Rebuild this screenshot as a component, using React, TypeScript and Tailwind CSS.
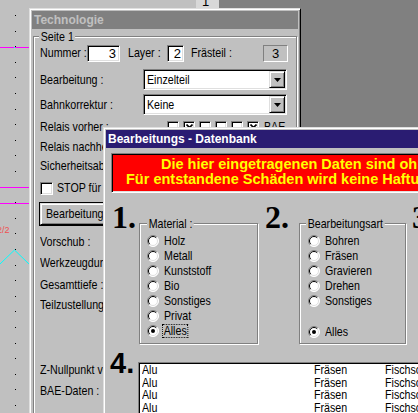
import React from 'react';

const sunken =
    'border border-t-[#808080] border-l-[#808080] border-b-white border-r-white shadow-[inset_1px_1px_0_#000,inset_-1px_-1px_0_#dfdfdf]';
const raised =
    'border border-t-[#dfdfdf] border-l-[#dfdfdf] border-b-black border-r-black shadow-[inset_1px_1px_0_#fff,inset_-1px_-1px_0_#808080]';
const etched =
    'border border-[#808080] shadow-[1px_1px_0_#fff,inset_1px_1px_0_#fff]';

// the old dialog font is narrow; squeeze Liberation Sans to match
function T({ children, className = '' }: { children: React.ReactNode; className?: string }) {
    return (
        <span className={`inline-block origin-left scale-x-[0.82] whitespace-nowrap ${className}`}>
            {children}
        </span>
    );
}

function Canvas() {
    const dots = Array.from({ length: 26 }, (_, i) => 15 + i * 15.6);
    return (
        <div className="absolute left-0 top-0 h-full w-[219px] bg-[#c0c0c0]">
            <svg width="219" height="413" className="block">
                {dots.map((y) => (
                    <rect key={y} x="15" y={Math.round(y)} width="1" height="1" fill="#000" />
                ))}
                <line x1="0" y1="47.5" x2="29" y2="47.5" stroke="#ff00ff" />
                <rect x="14" y="47" width="1" height="1" fill="#00ffff" />
                <line x1="0" y1="187.5" x2="29" y2="187.5" stroke="#ff00ff" />
                <line x1="0" y1="203.5" x2="29" y2="203.5" stroke="#ff00ff" />
                <text x="-3" y="233" fontSize="9" fill="#f05050" fontFamily="Liberation Sans, sans-serif">
                    2/2
                </text>
                <polyline points="0,264 14.5,250 29,264" fill="none" stroke="#00ffff" />
            </svg>
        </div>
    );
}

function DropButton() {
    return (
        <div className={`flex h-[17px] w-[16px] items-center justify-center bg-[#c0c0c0] ${raised}`}>
            <svg width="7" height="4" viewBox="0 0 7 4">
                <path d="M0 0h7L3.5 4z" fill="#000" />
            </svg>
        </div>
    );
}

function Select({ value }: { value: string }) {
    return (
        <div className={`flex h-[21px] w-[144px] items-center justify-between bg-white pl-[3px] pr-[1px] ${sunken}`}>
            <T>{value}</T>
            <DropButton />
        </div>
    );
}

function Check({ on, size = 12 }: { on?: boolean; size?: number }) {
    return (
        <div
            className={`flex shrink-0 items-center justify-center bg-white ${sunken}`}
            style={{ width: size, height: size }}
        >
            {on && (
                <svg width="7" height="7" viewBox="0 0 7 7">
                    <path d="M0.5 0.5l6 6M6.5 0.5l-6 6" stroke="#000" strokeWidth="1.6" />
                </svg>
            )}
        </div>
    );
}

function Radio({ on }: { on?: boolean }) {
    return (
        <svg width="12" height="12" viewBox="0 0 12 12" className="shrink-0">
            <circle cx="6" cy="6" r="5.5" fill="#fff" />
            <path d="M2.1 9.9A5.5 5.5 0 0 1 9.9 2.1" stroke="#808080" fill="none" />
            <path d="M9.9 2.1A5.5 5.5 0 0 1 2.1 9.9" stroke="#fff" fill="none" />
            <path d="M2.8 9.2A4.5 4.5 0 0 1 9.2 2.8" stroke="#000" fill="none" />
            <path d="M9.2 2.8A4.5 4.5 0 0 1 2.8 9.2" stroke="#dfdfdf" fill="none" />
            {on && <circle cx="6" cy="6" r="2" fill="#000" />}
        </svg>
    );
}

function TechWindow() {
    const row = 'flex h-[14px] items-center';
    return (
        <div className={`absolute left-[29px] top-[8px] h-[430px] w-[272px] bg-[#c0c0c0] p-[2px] ${raised}`}>
            <div className="h-[18px] bg-[#808080] pl-[2px] text-[12px] font-bold leading-[18px] text-[#c0c0c0]">
                Technologie
            </div>
            <div className={`relative mx-[1px] mt-[7px] h-[400px] pl-[6px] ${etched}`}>
                <T className="absolute -top-[8px] left-[5px] bg-[#c0c0c0] px-[2px] leading-[15px]">Seite 1</T>
                <div className="mt-[7px] flex h-[18px] items-center">
                    <div className="w-[47px]">
                        <T>Nummer :</T>
                    </div>
                    <div className={`h-[17px] w-[33px] bg-white pr-[3px] text-right leading-[15px] ${sunken}`}>3</div>
                    <div className="ml-[8px] w-[39px]">
                        <T>Layer :</T>
                    </div>
                    <div className={`h-[17px] w-[17px] bg-white pr-[2px] text-right leading-[15px] ${sunken}`}>2</div>
                    <div className="ml-[7px] w-[72px]">
                        <T>Frästeil :</T>
                    </div>
                    <div className="h-[17px] w-[25px] border border-t-[#808080] border-l-[#808080] border-b-white border-r-white text-center leading-[15px]">
                        3
                    </div>
                </div>
                <div className="mt-[7px] flex h-[21px] items-center">
                    <div className="w-[103px]">
                        <T>Bearbeitung :</T>
                    </div>
                    <Select value="Einzelteil" />
                </div>
                <div className="mt-[4px] flex h-[21px] items-center">
                    <div className="w-[103px]">
                        <T>Bahnkorrektur :</T>
                    </div>
                    <Select value="Keine" />
                </div>
                <div className={`mt-[5px] ${row}`}>
                    <div className="w-[127px]">
                        <T>Relais vorher :</T>
                    </div>
                    <div className="flex items-center gap-[4px]">
                        <Check />
                        <Check on />
                        <Check />
                        <Check />
                        <Check />
                        <Check on />
                    </div>
                    <T className="ml-[5px]">BAE</T>
                </div>
                <div className={`mt-[6px] ${row}`}>
                    <T>Relais nachher :</T>
                </div>
                <div className={`mt-[5px] ${row}`}>
                    <T>Sicherheitsabstand :</T>
                </div>
                <div className={`mt-[8px] ${row}`}>
                    <Check size={13} />
                    <T className="ml-[4px]">STOP für Werkzeugwechsel</T>
                </div>
                <div className="-ml-[1px] mt-[7px] h-[24px] w-[140px] border border-black">
                    <div className={`flex h-full items-center bg-[#c0c0c0] pl-[5px] ${raised}`}>
                        <T>Bearbeitungsdaten</T>
                    </div>
                </div>
                <div className={`mt-[9px] ${row}`}>
                    <T>Vorschub :</T>
                </div>
                <div className={`mt-[7px] ${row}`}>
                    <T>Werkzeugdurchmesser :</T>
                </div>
                <div className={`mt-[8px] ${row}`}>
                    <T>Gesamttiefe :</T>
                </div>
                <div className={`mt-[6px] ${row}`}>
                    <T>Teilzustellung :</T>
                </div>
                <div className={`mt-[51px] ${row}`}>
                    <T>Z-Nullpunkt verschieben :</T>
                </div>
                <div className={`mt-[7px] ${row}`}>
                    <T>BAE-Daten :</T>
                </div>
            </div>
        </div>
    );
}

interface RadioItem {
    text: string;
    on?: boolean;
    focus?: boolean;
    gap?: boolean;
}

function Group({
    label,
    width,
    pl,
    labelLeft,
    items,
}: {
    label: string;
    width: string;
    pl: string;
    labelLeft: string;
    items: RadioItem[];
}) {
    return (
        <div className={`relative mt-[25px] h-[121px] ${width} ${pl} pt-[9px] ${etched}`}>
            <T className={`absolute -top-[8px] ${labelLeft} bg-[#c0c0c0] px-[2px] leading-[15px]`}>{label}</T>
            {items.map((it) => (
                <div key={it.text} className={`flex h-[15px] items-center ${it.gap ? 'mt-[16px]' : ''}`}>
                    <Radio on={it.on} />
                    {it.focus ? (
                        <T className="ml-[3px] border border-dotted border-black px-[1px] leading-[12px]">{it.text}</T>
                    ) : (
                        <T className="ml-[5px]">{it.text}</T>
                    )}
                </div>
            ))}
        </div>
    );
}

function DbWindow() {
    const serif = "font-['Liberation_Serif',serif] text-[32px] font-bold leading-[32px]";
    const rows = ['Alu', 'Alu', 'Alu', 'Alu', 'Alu'];
    return (
        <div className={`absolute left-[103px] top-[127px] h-[330px] w-[460px] bg-[#c0c0c0] p-[2px] ${raised}`}>
            <div className="h-[18px] bg-[#2a1c72] pl-[2px] text-[12px] font-bold leading-[18px] text-white">
                Bearbeitungs - Datenbank
            </div>
            <div className={`ml-[5px] mt-[5px] h-[40px] w-[440px] whitespace-nowrap bg-[#ff0000] pt-[3px] text-[14.5px] font-bold leading-[15px] text-[#ffff00] ${sunken}`}>
                <div className="pl-[49px]">Die hier eingetragenen Daten sind ohne Gewähr !</div>
                <div className="pl-[14px]">Für entstandene Schäden wird keine Haftung übernommen !</div>
            </div>
            <div className="mt-[5px] flex items-start">
                <div className={`ml-[6px] mt-[3px] w-[27px] ${serif}`}>1.</div>
                <Group
                    label="Material :"
                    width="w-[119px]"
                    pl="pl-[7px]"
                    labelLeft="left-[7px]"
                    items={[
                        { text: 'Holz' },
                        { text: 'Metall' },
                        { text: 'Kunststoff' },
                        { text: 'Bio' },
                        { text: 'Sonstiges' },
                        { text: 'Privat' },
                        { text: 'Alles', on: true, focus: true },
                    ]}
                />
                <div className={`ml-[7px] mt-[3px] w-[34px] ${serif}`}>2.</div>
                <Group
                    label="Bearbeitungsart"
                    width="w-[107px]"
                    pl="pl-[8px]"
                    labelLeft="left-[6px]"
                    items={[
                        { text: 'Bohren' },
                        { text: 'Fräsen' },
                        { text: 'Gravieren' },
                        { text: 'Drehen' },
                        { text: 'Sonstiges' },
                        { text: 'Alles', on: true, gap: true },
                    ]}
                />
                <div className={`ml-[6px] mt-[3px] ${serif}`}>3.</div>
            </div>
            <div className="mt-[4px] flex items-start">
                <div className="ml-[4px] mt-[1px] w-[28px] text-[29px] font-bold leading-[29px]">4.</div>
                <div className={`mt-[14px] h-[70px] w-[330px] bg-white pl-[3px] pt-[1px] ${sunken}`}>
                    {rows.map((r, i) => (
                        <div key={i} className="flex h-[12.4px] items-center whitespace-nowrap">
                            <div className="w-[173px]">
                                <T>{r}</T>
                            </div>
                            <div className="w-[72px]">
                                <T>Fräsen</T>
                            </div>
                            <T>Fischschwanz</T>
                        </div>
                    ))}
                </div>
            </div>
        </div>
    );
}

export default function App() {
    return (
        <div className="relative h-[413px] w-[418px] overflow-hidden bg-[#808080] font-['Liberation_Sans',sans-serif] text-[13px] text-black">
            <Canvas />
            <div className="absolute left-[196px] top-0 h-[8px] w-[23px] overflow-hidden bg-[#d8d8d8]">
                <span className="-mt-[5px] ml-[6px] block leading-[13px]">1</span>
            </div>
            <TechWindow />
            <DbWindow />
        </div>
    );
}
